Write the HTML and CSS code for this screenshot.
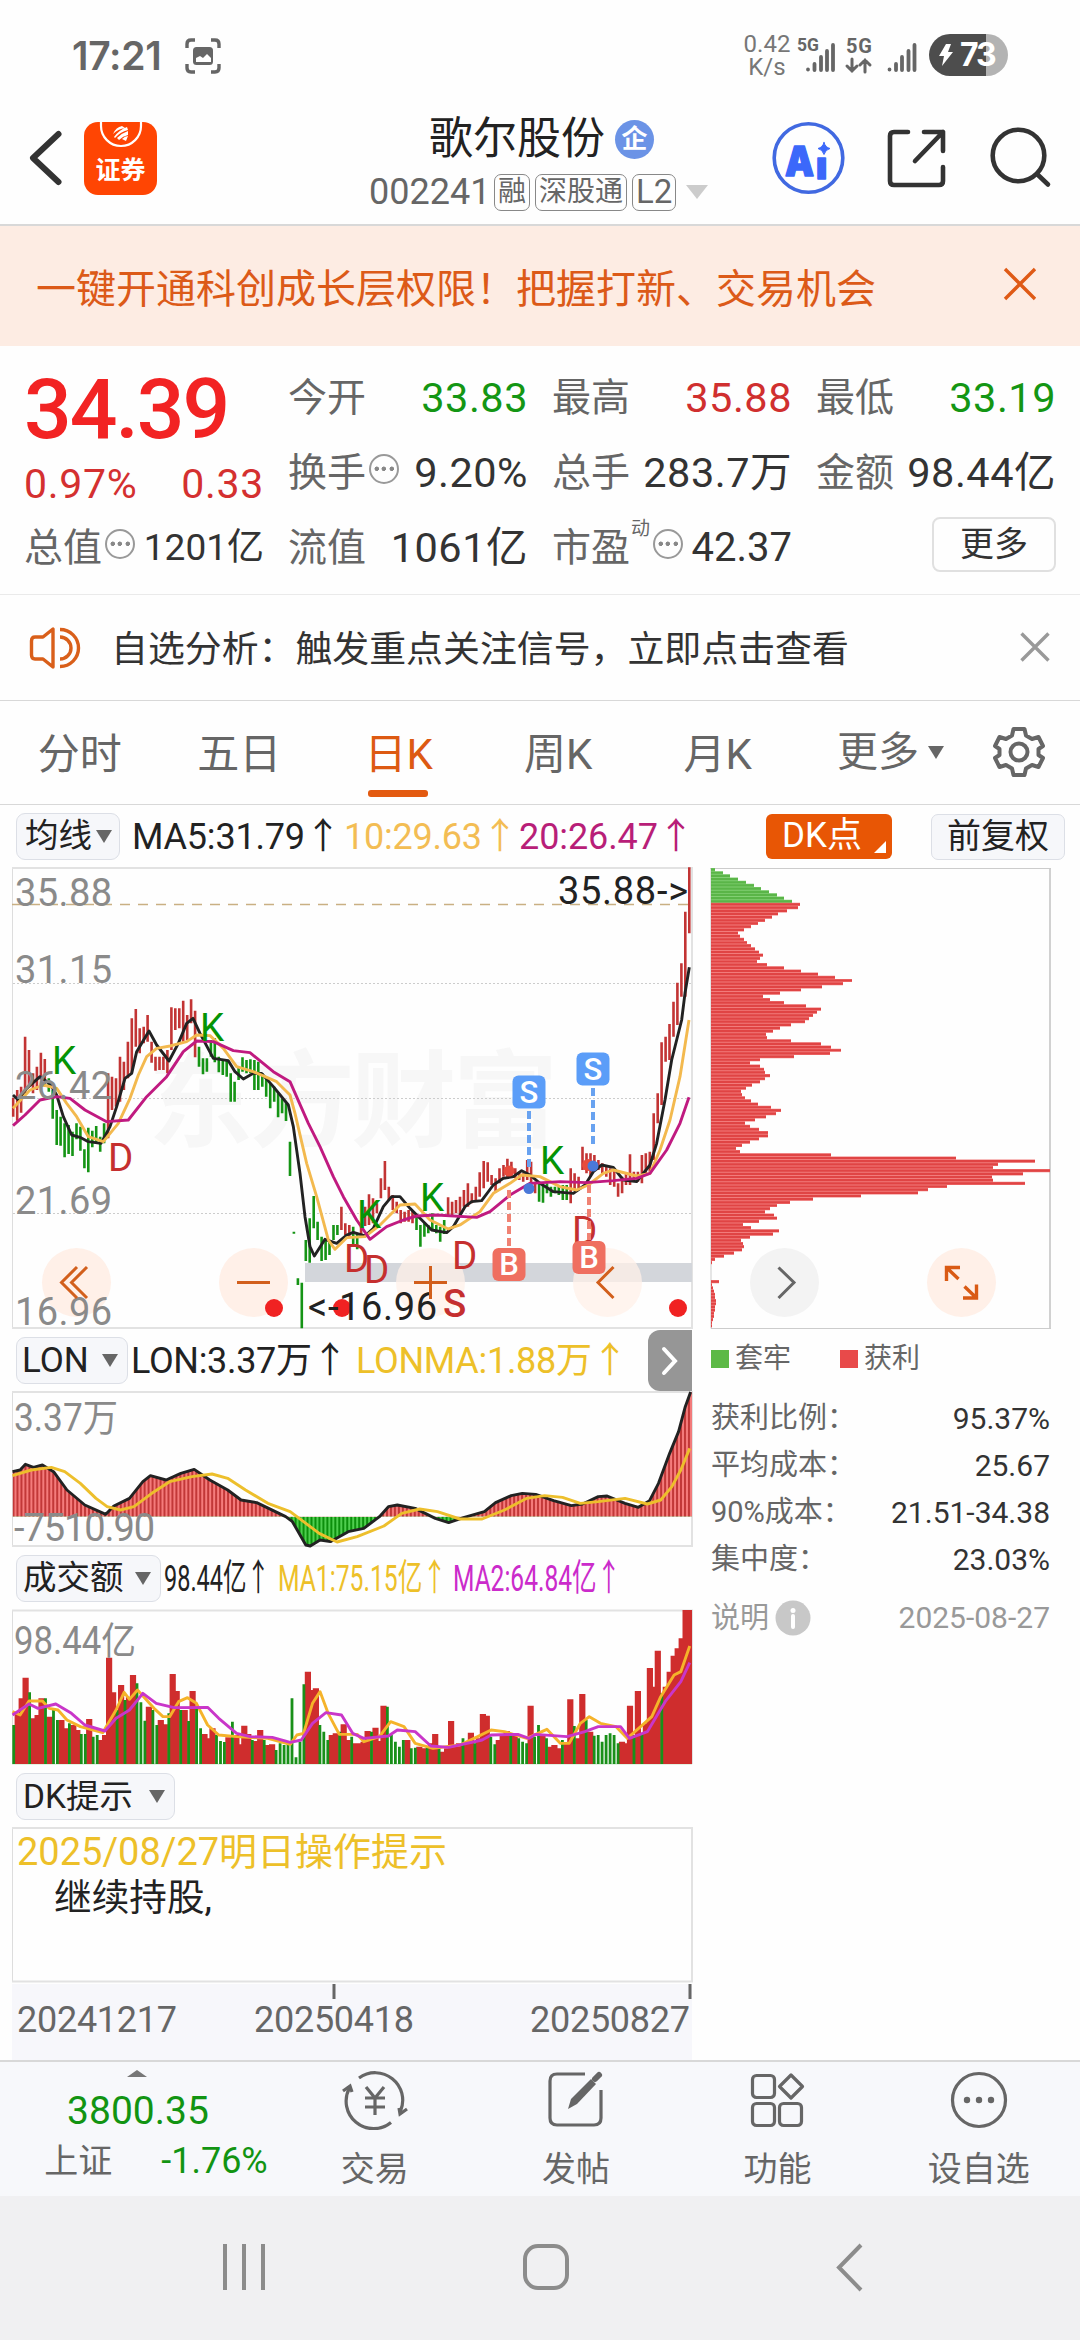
FILE: index.html
```html
<!DOCTYPE html>
<html lang="zh-CN">
<head>
<meta charset="utf-8">
<title>歌尔股份 002241</title>
<link rel="stylesheet" href="styles.css">
</head>
<body>
<header class="status">
  <span class="clock">17:21</span>
  <svg class="shot-icon" width="36" height="36" viewBox="0 0 36 36" fill="none" stroke="#666" stroke-width="3.4"><path d="M2 10V6q0-4 4-4h4M26 2h4q4 0 4 4v4M34 26v4q0 4-4 4h-4M10 34H6q-4 0-4-4v-4"/><rect x="8" y="9" width="20" height="18" rx="3.5" fill="#666" stroke="none"/><path d="M11 24v-4l4-2 3 2 4-4 4 4v4z" fill="#fff" stroke="none"/></svg>
  <div class="status-right">
    <div class="speed"><span>0.42</span><span>K/s</span></div>
    <svg class="signals" width="172" height="44" viewBox="792 33 172 44" fill="none" stroke="#666" stroke-width="3.8" stroke-linecap="round"><g fill="#666" stroke="none" class="net"><text x="796" y="51" font-size="17.5" textLength="22">5G</text><text x="845" y="53" font-size="20" textLength="26">5G</text></g><path d="M807 69.500v.1M813.500 64v6M820 57v13M826 51v19M832 45v25M888.500 69.500v.1M895 64v6M901 57v13M907.500 51v19M913.500 45v25"/><path stroke-width="3" d="M851 59v12M846 66l5 5 5-5M864 72V60M859 65l5-5 5 5"/></svg>
    <div class="battery"><svg width="14" height="22" viewBox="0 0 14 22"><path d="M7 0L0 12h5l-2 10L14 8H9l3-8z" fill="#fff"/></svg><b>73</b></div>
  </div>
</header>

<nav class="topbar">
  <svg class="back" width="36" height="58" viewBox="28 129 36 58"><path d="M58.500 134L33 158l25.500 24" fill="none" stroke="#333" stroke-width="6" stroke-linecap="round" stroke-linejoin="round"/></svg>
  <div class="broker"><svg width="44" height="27" viewBox="0 0 44 27"><path d="M2 0v4a20 20 0 0 0 40 0V0" fill="none" stroke="#fff" stroke-width="2.200"/><path d="M14 12Q17 5 23 4L26 6Q19 7 14 12ZM15 15Q20 8 28 5l1 3Q21 10 16 16ZM18 16Q23 11 29 9v4q-5 1-9 5zM23 17q3-3 6-3l-2 5z" fill="#fff"/></svg><span>证券</span></div>
  <div class="title">
    <div class="name">歌尔股份<i class="corp">企</i></div>
    <div class="code"><span>002241</span><i class="tag">融</i><i class="tag">深股通</i><i class="tag">L2</i><i class="caret"></i></div>
  </div>
  <svg class="tools" width="285" height="78" viewBox="769 119 285 78" fill="none" stroke="#333" stroke-width="4.600" stroke-linecap="round" stroke-linejoin="round">
    <circle cx="808.500" cy="158" r="34.300" stroke="#4169e1" stroke-width="3.600"/>
    <g class="ai"><text x="785" y="176" font-size="41" textLength="29" lengthAdjust="spacingAndGlyphs">A</text><text x="816" y="179" font-size="38">ı</text></g>
    <path d="M824 142.500q1.500 5 6 6-4.500 1-6 6-1.500-5-6-6 4.500-1 6-6z" fill="#3b68fa" stroke="#3b68fa" stroke-width="1"/>
    <path d="M908 132h-14q-4 0-4 4v45q0 4 4 4h45q4 0 4-4v-14M924 132h19v19M943 132l-28 29"/>
    <circle cx="1018.500" cy="155.500" r="25.800"/><path d="M1037 174l11 10.500"/>
  </svg>
</nav>

<section class="banner"><span>一键开通科创成长层权限！把握打新、交易机会</span><svg width="34" height="34" viewBox="0 0 34 34"><path d="M2 2l30 30M32 2L2 32" stroke="#df5a16" stroke-width="3.400"/></svg></section>

<section class="quote">
  <div class="lead">
    <div class="price">34.39</div>
    <div class="chg"><span>0.97%</span><span>0.33</span></div>
    <div class="cell small"><label>总值</label><i class="dots"></i><b>1201亿</b></div>
  </div>
  <div class="cell"><label>今开</label><b class="down">33.83</b></div>
  <div class="cell"><label>最高</label><b class="up">35.88</b></div>
  <div class="cell"><label>最低</label><b class="down">33.19</b></div>
  <div class="cell"><label>换手</label><i class="dots"></i><b>9.20%</b></div>
  <div class="cell"><label>总手</label><b>283.7万</b></div>
  <div class="cell"><label>金额</label><b>98.44亿</b></div>
  <div class="cell"><label>流值</label><b>1061亿</b></div>
  <div class="cell pe"><label>市盈</label><sup>动</sup><i class="dots"></i><b>42.37</b></div>
  <div class="cell"><span class="more">更多</span></div>
</section>

<section class="notice">
  <svg width="54" height="46" viewBox="28 624 54 46" fill="none" stroke="#d95f1a" stroke-width="3.400"><path d="M53 628v38L43 658h-8q-3.500 0-3.500-4v-14q0-4 3.500-4h8z" stroke-linejoin="round"/><path d="M60 636a11 11 0 0 1 0 22M60 628.500a18.500 18.500 0 0 1 0 37"/></svg>
  <span>自选分析：触发重点关注信号，立即点击查看</span>
  <svg width="30" height="30" viewBox="0 0 30 30"><path d="M1.500 1.500l27 27M28.500 1.500l-27 27" stroke="#999" stroke-width="3.400"/></svg>
</section>

<nav class="tabs">
  <span>分时</span><span>五日</span><span class="on">日K</span><span>周K</span><span>月K</span>
  <span class="tab-more">更多<i class="tri"></i></span>
  <svg width="52" height="52" viewBox="-26 -26 52 52" fill="none" stroke="#666" stroke-width="4"><path stroke-linejoin="round" d="M-5.500-23H5.500L7-16.500L13-13L19.500-15L24-6L19.500-3V3L24 6L19.500 15L13 13L7 16.500L5.500 23H-5.500L-7 16.500L-13 13L-19.500 15L-24 6L-19.500 3V-3L-24-6L-19.500-15L-13-13L-7-16.500Z"/><circle r="8.500"/></svg>
</nav>

<main class="panel">
  <div class="left">
    <div class="ind-row first">
      <span class="select">均线<i class="tri"></i></span>
      <svg width="572" height="62" viewBox="120 805 572 62" class="ind"><text x="132" y="849" textLength="173">MA5:31.79</text><text x="305" y="849">↑</text><g fill="#f3bd54"><text x="344" y="849" textLength="138">10:29.63</text><text x="482" y="849">↑</text></g><g fill="#b81e78"><text x="519" y="849" textLength="139">20:26.47</text><text x="658" y="849">↑</text></g></svg>
    </div>

    <svg class="plot" width="700" height="463" viewBox="0 867 700 463">
      <text class="mark" x="148" y="1138" textLength="410">东方财富</text>
      <path d="M13 983.500H691M13 1098.500H691M13 1213.500H691" stroke="#ccc" stroke-dasharray="2 2"/>
      <path d="M12.500 868V1328" stroke="#ddd"/><path d="M12 868H693M12 1328H693M692 867V1329" stroke="#e2e2e2" stroke-width="2"/>
      <path d="M12 904.500H692" stroke="#c9b083" stroke-width="1.500" stroke-dasharray="10 8"/>
      <rect x="305" y="1263" width="387" height="19" fill="#d3d6db"/>
      <g fill="#fff0e8"><circle cx="76.500" cy="1282.500" r="34.500"/><circle cx="253.500" cy="1282.500" r="34.500"/><circle cx="430.500" cy="1282.500" r="34.500" fill-opacity=".75"/><circle cx="607.500" cy="1282.500" r="34.500" fill-opacity=".75"/></g>
      <g id="candles"></g>
      <g class="mas" transform="translate(0 860) scale(.33333)">
        <path stroke="#222" d="M39 705L55 720L80 685L120 650L150 672L170 705L190 770L215 825L240 832L265 845L303 850L330 800L350 740L375 655L395 640L410 575L447 513L470 555L507 603L535 550L560 490L579 475L600 520L640 595L685 602L705 635L730 657L760 640L785 640L820 680L865 735L880 800L900 940L915 1070L930 1160L943 1188L975 1138L1010 1150L1040 1125L1060 1117L1095 1128L1120 1105L1150 1040L1175 1010L1200 1010L1230 1045L1260 1075L1295 1110L1340 1118L1360 1100L1395 1040L1415 1025L1445 1022L1480 975L1510 955L1540 950L1565 932L1590 945L1620 970L1660 995L1720 1000L1755 975L1780 935L1805 915L1840 922L1870 960L1910 965L1950 915L1970 850L1995 720L2015 600L2045 480L2055 400L2068 322"/>
        <path stroke="#f3b94e" d="M39 745L90 690L130 675L170 685L200 730L230 770L265 830L310 845L355 790L390 715L415 645L440 590L470 565L510 558L560 545L590 525L630 527L670 565L710 620L760 635L830 665L870 705L885 760L920 910L950 1010L985 1140L1005 1168L1040 1133L1095 1130L1140 1095L1200 1035L1245 1032L1290 1080L1345 1107L1380 1095L1440 1055L1480 1000L1530 970L1565 945L1620 950L1680 980L1730 990L1765 975L1810 940L1840 930L1910 948L1950 940L1980 870L2010 780L2040 650L2067 480"/>
        <path stroke="#c01a80" d="M39 797L75 765L120 720L170 710L210 715L255 750L320 785L385 780L440 710L500 650L550 575L590 543L640 545L700 572L750 578L820 635L870 665L925 790L960 860L1000 950L1030 1010L1070 1080L1110 1138L1160 1100L1210 1080L1250 1068L1310 1065L1430 1072L1470 1055L1530 1005L1590 970L1680 965L1760 968L1840 962L1910 955L1950 940L2000 870L2040 790L2067 712"/>
      </g>
      <g class="axis"><text x="15" y="905.500" textLength="97">35.88</text><text x="15" y="983" textLength="97">31.15</text><text x="15" y="1099" textLength="97">26.42</text><text x="15" y="1213.500" textLength="97">21.69</text><text x="15" y="1325" textLength="97">16.96</text></g>
      <g class="sig" fill="#059405"><text x="52" y="1073.500">K</text><text x="200" y="1041">K</text><text x="357" y="1228">K</text><text x="420" y="1210.500">K</text><text x="540" y="1173.500">K</text></g>
      <g class="sig" fill="#c52f2f"><text x="108" y="1171">D</text><text x="344" y="1272">D</text><text x="364" y="1283">D</text><text x="452" y="1269">D</text><text x="572" y="1244">D</text><text x="443" y="1316.500" font-weight="500">S</text></g>
      <g fill="none" stroke-width="4" stroke-dasharray="8 4"><path stroke="#68a2f0" d="M529 1111V1168M593 1088V1145"/><path stroke="#f08273" d="M509 1190V1247M589 1185V1240"/></g>
      <circle cx="509" cy="1171" r="5.500" fill="#e84c3d"/><circle cx="588" cy="1165" r="6" fill="#e84c3d"/><circle cx="529" cy="1188.500" r="5.500" fill="#4a78d8"/><circle cx="593" cy="1166" r="5.500" fill="#4a78d8"/>
      <g class="badge"><rect x="512.500" y="1075.500" width="33" height="33" rx="6" fill="#5b9df8"/><rect x="576.500" y="1052.500" width="33" height="33" rx="6" fill="#5b9df8"/><rect x="492.500" y="1248" width="33" height="33" rx="6" fill="#ef6f60"/><rect x="572.500" y="1241" width="33" height="33" rx="6" fill="#ef6f60"/><text x="529" y="1103">S</text><text x="593" y="1080">S</text><text x="509" y="1275">B</text><text x="589" y="1268">B</text></g>
      <g fill="#f02222"><circle cx="274" cy="1308" r="9"/><circle cx="342" cy="1308" r="9"/><circle cx="678" cy="1308" r="9"/></g>
      <g class="tip"><text x="308" y="1320" textLength="129">&lt;-16.96</text><text x="558" y="903.500" textLength="130">35.88-&gt;</text></g>
      <path d="M77 1267L61.500 1282.500L77 1298M87 1267L71.500 1282.500L87 1298M237 1282.500H270M414 1282.500H447M430.500 1266V1299M613.500 1267L598 1282.500L613.500 1298" fill="none" stroke="#d25f1c" stroke-width="3"/>
    </svg>

    <div class="ind-row">
      <span class="select lon">LON<i class="tri"></i></span>
      <svg width="520" height="61" viewBox="128 1330 520 61" class="ind"><text x="131" y="1373" textLength="181">LON:3.37万</text><text x="312" y="1373">↑</text><g fill="#edc029"><text x="356" y="1373" textLength="236">LONMA:1.88万</text><text x="592" y="1373">↑</text></g></svg>
      <span class="expand"><svg width="18" height="30" viewBox="0 0 18 30"><path d="M3 3l11 12L3 27" fill="none" stroke="#fff" stroke-width="4" stroke-linecap="round"/></svg></span>
    </div>

    <svg class="plot" width="700" height="156" viewBox="0 1391 700 156">
      <defs>
        <pattern id="pr" x="28" width="8.900" height="20" patternUnits="userSpaceOnUse"><rect width="9" height="20" fill="#f57c7c"/><rect width="4.500" height="20" fill="#c23838"/></pattern>
        <pattern id="pg" x="28" width="8.900" height="20" patternUnits="userSpaceOnUse"><rect width="9" height="20" fill="#4fcf4f"/><rect width="4.500" height="20" fill="#0c8f0c"/></pattern>
        <clipPath id="above"><rect x="28" y="180" width="1523" height="380"/></clipPath><clipPath id="below"><rect x="28" y="560" width="1523" height="88"/></clipPath>
        <path id="lonfill" d="M28 560L28 425L45 420L57 403L75 412L95 405L120 425L150 480L190 525L237 553L255 528L290 505L320 455L337 437L372 450L405 430L435 418L470 450L510 480L540 510L575 518L640 560L655 575L685 645L695 648L717 630L740 635L780 605L815 595L850 560L870 530L890 525L930 535L975 565L1005 578L1040 562L1085 545L1110 518L1145 497L1170 490L1200 493L1240 512L1280 527L1305 522L1340 500L1360 498L1400 520L1430 532L1455 512L1475 460L1500 370L1520 305L1535 230L1547 186L1550 186V560Z"/>
      </defs>
      <path d="M12.500 1392V1546" stroke="#ddd"/><path d="M12 1392H693M12 1546H693M692 1391V1547" stroke="#e2e2e2" stroke-width="2"/>
      <g class="mas" transform="translate(0 1330) scale(.44643 .33333)">
        <use href="#lonfill" fill="url(#pr)" clip-path="url(#above)"/><use href="#lonfill" fill="url(#pg)" clip-path="url(#below)"/>
        <path stroke="#222" d="M28 425L45 420L57 403L75 412L95 405L120 425L150 480L190 525L237 553L255 528L290 505L320 455L337 437L372 450L405 430L435 418L470 450L510 480L540 510L575 518L640 560L655 575L685 645L695 648L717 630L740 635L780 605L815 595L850 560L870 530L890 525L930 535L975 565L1005 578L1040 562L1085 545L1110 518L1145 497L1170 490L1200 493L1240 512L1280 527L1305 522L1340 500L1360 498L1400 520L1430 532L1455 512L1475 460L1500 370L1520 305L1535 230L1547 186"/>
        <path stroke="#edbf2c" d="M28 437L70 420L115 412L145 425L180 460L215 505L240 530L270 540L300 530L340 490L380 455L430 440L475 432L510 445L550 480L600 520L650 545L680 575L715 610L755 636L800 620L860 588L900 550L940 537L980 545L1030 567L1080 567L1130 540L1180 505L1220 497L1260 502L1300 520L1340 515L1400 505L1450 522L1480 510L1505 470L1525 420L1545 355"/>
      </g>
      <g class="axis"><text x="14" y="1431" textLength="104" lengthAdjust="spacingAndGlyphs">3.37万</text><text x="14" y="1541" textLength="141">-7510.90</text></g>
    </svg>

    <div class="ind-row tall">
      <span class="select vol">成交额<i class="tri"></i></span>
      <svg width="531" height="62" viewBox="161 1547 531 62" class="ind narrow"><text x="164" y="1590.500" textLength="106" lengthAdjust="spacingAndGlyphs">98.44亿↑</text><text x="278" y="1590.500" fill="#edc029" textLength="169" lengthAdjust="spacingAndGlyphs">MA1:75.15亿↑</text><text x="453" y="1590.500" fill="#cb2bcb" textLength="168" lengthAdjust="spacingAndGlyphs">MA2:64.84亿↑</text></svg>
    </div>

    <svg class="plot" width="700" height="157" viewBox="0 1609 700 157">
      <path d="M12.500 1610V1764" stroke="#ddd"/><path d="M12 1610.500H693M692 1610V1764" stroke="#e2e2e2" stroke-width="2"/><path d="M12 1764H692" stroke="#d9eed9" stroke-width="1.500"/>
      <g id="volume"></g>
      <g class="mas" transform="translate(0 1330) scale(.44643 .33333)">
        <path stroke="#f5b32a" d="M28 1145L45 1155L65 1113L95 1113L110 1135L130 1140L150 1170L180 1190L230 1208L260 1140L278 1087L290 1108L308 1080L345 1135L365 1160L380 1160L400 1115L420 1103L440 1120L465 1185L490 1215L530 1220L600 1225L650 1243L665 1215L680 1210L700 1120L717 1085L735 1150L760 1213L800 1213L815 1235L850 1220L875 1175L905 1190L930 1240L970 1255L1030 1245L1070 1220L1100 1200L1130 1205L1180 1225L1225 1198L1255 1240L1275 1240L1300 1180L1320 1160L1345 1180L1380 1190L1405 1225L1435 1190L1460 1160L1480 1100L1510 1035L1525 1025L1545 948"/>
        <path stroke="#c936c9" d="M28 1155L65 1122L85 1135L125 1122L160 1150L190 1185L235 1203L260 1165L290 1140L320 1090L350 1120L390 1133L465 1132L490 1165L530 1210L560 1220L610 1222L650 1237L675 1230L700 1180L730 1148L765 1155L790 1210L815 1225L870 1218L890 1200L930 1205L965 1248L1005 1252L1080 1230L1100 1215L1160 1213L1185 1225L1200 1213L1270 1220L1310 1205L1340 1190L1390 1190L1410 1225L1450 1205L1490 1115L1525 1055L1545 998"/>
      </g>
      <g class="axis"><text x="14" y="1653.500" textLength="122" lengthAdjust="spacingAndGlyphs">98.44亿</text></g>
    </svg>

    <div class="ind-row"><span class="select dk">DK提示<i class="tri"></i></span></div>

    <svg class="plot" width="700" height="233" viewBox="0 1827 700 233">
      <rect x="12" y="1984" width="680" height="76" fill="#f7f7fb"/>
      <path d="M12.500 1828V1981" stroke="#ddd"/><path d="M12 1828H693M12 1981.500H693M692 1827V1982" stroke="#e2e2e2" stroke-width="2"/>
      <text x="17" y="1865" font-size="38" fill="#edc029" textLength="430" lengthAdjust="spacingAndGlyphs">2025/08/27明日操作提示</text>
      <text x="54" y="1910.500" font-size="37" fill="#222" textLength="158" lengthAdjust="spacingAndGlyphs">继续持股,</text>
      <path d="M334 1984V1999M690 1984V1999" stroke="#666" stroke-width="3"/>
      <g font-size="36" fill="#666"><text x="17" y="2032" textLength="160">20241217</text><text x="254" y="2032" textLength="160">20250418</text><text x="530" y="2032" textLength="160">20250827</text></g>
    </svg>
  </div>

  <aside class="right">
    <div class="opts"><span class="dkbtn">DK点<i></i></span><span class="adj">前复权</span></div>
    <svg class="plot chips" width="342" height="463" viewBox="710 867 342 463">
      <path d="M710 868.500H1051M711 868V1328.500H1051" fill="none" stroke="#ccc"/><path d="M1050 868V1329" stroke="#ccc" stroke-width="1.800"/>
      <g id="chips"></g>
      <circle cx="784.500" cy="1282.500" r="34.500" fill="#f3f3f3"/><circle cx="961.500" cy="1282.500" r="34.500" fill="#fff0e8"/>
      <path d="M778.500 1267.500L794 1282.500L778.500 1298" fill="none" stroke="#666" stroke-width="3"/>
      <path d="M960 1267.500H946.500V1281M947 1268L958.500 1279M963 1298H976.500V1284.500M976 1297.500L964.500 1286.500" fill="none" stroke="#d95a14" stroke-width="3.400"/>
    </svg>
    <div class="legend"><i class="g"></i><span>套牢</span><i class="r"></i><span>获利</span></div>
    <dl><dt>获利比例：</dt><dd>95.37%</dd><dt>平均成本：</dt><dd>25.67</dd><dt>90%成本：</dt><dd>21.51-34.38</dd><dt>集中度：</dt><dd>23.03%</dd></dl>
    <div class="note"><span>说明</span><svg width="36" height="36" viewBox="0 0 36 36"><circle cx="18" cy="18" r="17.500" fill="#c8c8c8"/><circle cx="18" cy="10.500" r="2.500" fill="#fff"/><path d="M18 16v11" stroke="#fff" stroke-width="4" stroke-linecap="round"/></svg><time>2025-08-27</time></div>
  </aside>
</main>

<footer class="bottom">
  <div class="index"><i class="uptri"></i><strong>3800.35</strong><div><span>上证</span><b>-1.76%</b></div></div>
  <div class="item"><svg width="66" height="60" viewBox="-33 -30 66 60" fill="none" stroke="#666" stroke-width="3.200"><path d="M-16-22A27.500 27.500 0 0 1 25.500 11M16 22.500A27.500 27.500 0 0 1-25.500-12"/><path d="M-32-9l7-5 2 6M32 9l-7 5-1-6"/><path d="M-9-13L0-2L9-13M0-2V15M-10-2H10M-10 7H10"/></svg><span>交易</span></div>
  <div class="item"><svg width="66" height="60" viewBox="-33 -30 66 60" fill="none" stroke="#666" stroke-width="3.200"><path d="M9-26H-19q-7 0-7 7V18q0 7 7 7H18q7 0 7-7V-10"/><path d="M-8 9L-5-1L15-21l5 5L1 4z" fill="#666" stroke="none"/><path d="M19-21l4-4" stroke-width="6" stroke-linecap="round"/></svg><span>发帖</span></div>
  <div class="item"><svg width="66" height="60" viewBox="-33 -30 66 60" fill="none" stroke="#666" stroke-width="3.200" stroke-linejoin="round"><rect x="-24.500" y="-24.500" width="22" height="22" rx="4"/><rect x="-24.500" y="3.500" width="22" height="22" rx="4"/><rect x="2.500" y="3.500" width="22" height="22" rx="4"/><path d="M14-25L25.500-13.500L14-2L2.500-13.500Z"/></svg><span>功能</span></div>
  <div class="item"><svg width="66" height="60" viewBox="-33 -30 66 60"><circle r="26.500" fill="none" stroke="#666" stroke-width="3.200"/><g fill="#666"><circle cx="-12" r="3.200"/><circle r="3.200"/><circle cx="12" r="3.200"/></g></svg><span>设自选</span></div>
</footer>

<nav class="sysnav">
  <svg width="1080" height="144" viewBox="0 2196 1080 144" fill="none" stroke="#8c8c8c" stroke-width="4"><path d="M225 2244V2290M244 2244V2290M263 2244V2290"/><rect x="525" y="2246" width="42" height="42" rx="13"/><path d="M861 2245L839 2267.500L861 2290"/></svg>
</nav>
<script src="charts.js"></script>
</body>
</html>
```

FILE: styles.css
```css
* { box-sizing: border-box; }
body { margin: 0; width: 1080px; height: 2340px; overflow: hidden; background: #fefefe; color: #333; font-family: Roboto, "Noto Sans CJK SC", sans-serif; }
svg { display: block; flex: none; }
i { font-style: normal; }
b { font-weight: 400; }
span, b, label { white-space: nowrap; }

.status { height: 92px; padding: 0 72px; display: flex; align-items: flex-start; }
.clock { font: 600 39px/44px Inter, sans-serif; color: #666; margin-top: 34px; letter-spacing: -0.3px; width: 113px; }
.shot-icon { margin-top: 38px; }
.status-right { margin-left: auto; margin-top: 33px; display: flex; }
.speed { display: flex; flex-direction: column; align-items: center; color: #777; font-size: 24px; line-height: 22.500px; width: 48px; margin-right: 2px; }
.signals { margin-right: -36px; }
.net { font-family: Roboto, sans-serif; font-weight: 700; }
.battery { width: 79px; height: 42px; margin-top: 1px; border-radius: 21px; background: linear-gradient(90deg, #4d4d4d 57px, #b3b3b3 57px); display: flex; align-items: center; padding-left: 10px; gap: 7px; }
.battery b { color: #fff; font: 700 32px/42px Inter, sans-serif; letter-spacing: -2px; }

.topbar { height: 134px; border-bottom: 2px solid #d8d8d8; display: flex; align-items: flex-start; padding-left: 28px; }
.back { margin-top: 37px; }
.broker { width: 73px; height: 73px; margin: 30px 0 0 20px; border-radius: 14px; background: #ff4503; display: flex; flex-direction: column; align-items: center; }
.broker span { color: #fff; font: 700 25px/26px "Noto Sans CJK SC", sans-serif; margin-top: 6px; }
.title { margin-left: 212px; width: 346px; }
.name { font-size: 44px; line-height: 60px; color: #222; margin: 16px 0 0 60px; height: 62px; display: flex; align-items: center; }
.corp { width: 39px; height: 39px; border-radius: 50%; background: #6b93e6; color: #fff; font-size: 26px; font-weight: 700; line-height: 38px; text-align: center; margin-left: 10px; }
.code { display: flex; align-items: center; height: 44px; font-size: 36px; line-height: 44px; color: #666; }
.code span { width: 125px; }
.tag { border: 1.500px solid #888; border-radius: 7px; height: 37px; line-height: 34px; font-size: 28px; padding: 0 3px; margin-right: 5px; }
.tag:nth-of-type(3) { font-size: 33px; padding: 0 3px; }
.caret { border: 11px solid transparent; border-top: 14px solid #ccc; border-bottom: 0; margin-left: 5px; }
.tools { margin: 27px 0 0 54px; }
.ai { font-family: Inter, sans-serif; font-weight: 900; fill: #3b68fa; stroke: #3b68fa; stroke-width: 1.5px; }

.banner { height: 120px; background: #fdece3; color: #dc5a18; display: flex; align-items: center; justify-content: space-between; padding: 0 43px 0 36px; font-size: 40px; }
.banner svg { margin-top: -4px; }

.quote { height: 249px; border-bottom: 1.500px solid #eaeaea; padding: 14px 0 0 24px; display: grid; grid-template-columns: 240px 240px 240px 240px; grid-template-rows: 75px 75px 75px; column-gap: 24px; }
.lead { grid-row: 1 / 4; display: flex; flex-direction: column; }
.price { height: 97px; line-height: 99px; font-size: 84px; font-weight: 500; color: #f22323; letter-spacing: -2px; }
.chg { height: 53px; line-height: 54px; font-size: 41px; letter-spacing: .7px; color: #d43030; display: flex; justify-content: space-between; }
.cell { height: 75px; display: flex; align-items: center; line-height: 60px; }
.cell label { font-size: 39px; color: #666; }
.cell b { margin-left: auto; font-size: 41.500px; letter-spacing: .5px; }
.cell.small b { font-size: 37px; letter-spacing: 0; }
.cell .down { color: #149614; }
.cell .up { color: #d02f2f; }
.dots { width: 30px; height: 30px; border: 2.500px solid #999; border-radius: 50%; margin: -8px 0 0 3px; background: radial-gradient(circle, #888 0 2px, transparent 2.500px) 50% 50% / 7.500px 7.500px no-repeat, radial-gradient(circle, #888 0 2px, transparent 2.500px) 10% 50% / 7.500px 7.500px no-repeat, radial-gradient(circle, #888 0 2px, transparent 2.500px) 90% 50% / 7.500px 7.500px no-repeat; }
.pe sup { font-size: 19px; line-height: 20px; color: #666; margin: -38px 0 0 1px; }
.cell.pe b { font-size: 40px; letter-spacing: 0; }
.more { margin-left: auto; width: 124px; height: 55px; border: 2px solid #e0e0e0; border-radius: 8px; text-align: center; font-size: 34px; line-height: 50px; margin-top: -6px; }

.notice { height: 106px; border-bottom: 1.500px solid #d8d8d8; display: flex; align-items: center; padding: 0 30px 0 28px; font-size: 36.900px; }
.notice span { margin-left: 29px; margin-top: -4px; }
.notice svg:last-child { margin-left: auto; margin-top: -1px; }

.tabs { height: 104px; border-bottom: 1.500px solid #d8d8d8; display: flex; align-items: center; font-size: 42px; color: #666; }
.tabs > span { width: 159.500px; text-align: center; height: 102px; line-height: 105px; position: relative; }
.tabs .on { color: #dd5a12; }
.tabs .on::after { content: ""; position: absolute; left: 50%; margin-left: -31px; bottom: 7px; width: 60px; height: 6.500px; border-radius: 3px; background: #e35a10; }
.tabs .tab-more { width: 186px; display: flex; align-items: center; justify-content: center; gap: 9px; font-size: 41px; }
.tri { border: 8px solid transparent; border-top: 13px solid #666; border-bottom: 0; display: inline-block; }
.tabs svg { margin-left: 9px; margin-top: -2px; }

.panel { display: flex; height: 1255px; }
.left { width: 700px; }
.right { width: 380px; padding-left: 10px; }
.plot { overflow: visible; font-family: Roboto, "Noto Sans CJK SC", sans-serif; }
.ind-row { height: 61px; display: flex; align-items: center; padding-left: 16px; width: 700px; }
.ind-row.first, .ind-row.tall { height: 62px; }
.select { background: #f6f7fa; border: 1.500px solid #dcdfe6; border-radius: 9px; height: 47px; width: 104px; padding: 0 9px; display: flex; align-items: center; justify-content: space-between; font-size: 33.500px; line-height: 42px; color: #222; flex: none; }
.first .select { padding: 0 7px 0 8px; }
.lon { width: 112px; font-size: 35px; padding-left: 5px; }
.vol { width: 145px; padding-left: 6px; }
.dk { width: 159px; padding-left: 6px; }
.ind { font-size: 36px; fill: #222; }
.ind.narrow { font-size: 37px; }
.expand { width: 44px; height: 61px; background: #969696; border-radius: 12px 0 0 12px; display: flex; align-items: center; justify-content: center; }
.mark { font-size: 105px; font-weight: 700; fill: #f7f7f7; }
.mas path { fill: none; stroke-width: 2.900px; vector-effect: non-scaling-stroke; stroke-linejoin: round; }
.axis { font-size: 38px; fill: #8a8a8a; }
.sig { font-size: 38.500px; }
.tip { font-size: 38px; fill: #222; }
.badge text { font-size: 31px; font-weight: 500; fill: #fff; text-anchor: middle; }

.opts { height: 62px; display: flex; align-items: center; padding-left: 56px; padding-top: 1px; }
.dkbtn { width: 126px; height: 45px; border-radius: 6px; background: #e85605; color: #fff; font-size: 35px; line-height: 43px; padding-left: 16px; position: relative; }
.dkbtn i { position: absolute; right: 6px; bottom: 6px; border-left: 12px solid transparent; border-bottom: 12px solid #fff; }
.adj { width: 134px; height: 46px; margin-left: 39px; border: 1.500px solid #dcdfe6; border-radius: 7px; background: #f6f7fa; font-size: 34px; line-height: 42px; text-align: center; color: #222; }
.legend { height: 58px; margin-left: 1px; display: flex; align-items: center; font-size: 28px; color: #666; line-height: 36px; }
.legend i { width: 18px; height: 18px; background: #5cb946; margin-right: 6px; }
.legend .r { background: #e84a4a; margin-left: 49px; }
dl { margin: 7px 0 0 1px; width: 339px; display: grid; grid-template-columns: auto auto; grid-auto-rows: 47px; line-height: 47px; font-size: 29px; }
dt { color: #666; }
dd { margin: 0; text-align: right; font-size: 30px; }
.note { margin: 16px 0 0 1px; width: 339px; height: 38px; display: flex; align-items: center; color: #999; font-size: 29px; line-height: 38px; }
.note svg { margin-left: 6px; }
.note time { margin-left: auto; font-size: 30px; }

.bottom { height: 136px; background: #f7f8fb; border-top: 2px solid #d8d8d8; display: flex; }
.index { width: 274px; display: flex; flex-direction: column; align-items: center; color: #129412; }
.index strong { font-weight: 400; font-size: 39px; line-height: 46px; margin: 11px 0 0 2px; }
.index div { display: flex; gap: 49px; font-size: 36px; line-height: 48px; margin-left: 38px; margin-top: 3px; }
.index span { color: #666; font-size: 34px; }
.uptri { border: 10px solid transparent; border-bottom: 7px solid #777; border-top: 0; margin-top: 8px; }
.item { width: 201.400px; display: flex; flex-direction: column; align-items: center; padding-top: 8px; color: #666; font-size: 34px; line-height: 46px; }
.item span { margin-top: 16px; }
.sysnav { height: 144px; background: #f0f0f2; }
```

FILE: charts.js
```js
const NS = 'http://www.w3.org/2000/svg';
function addPath(id, d, fill, extra) {
  const p = document.createElementNS(NS, 'path');
  p.setAttribute('d', d);
  p.setAttribute('fill', fill);
  for (const k in extra || {}) p.setAttribute(k, extra[k]);
  document.getElementById(id).appendChild(p);
}

// Daily candles: high and low, in thirds of a pixel below y = 860, then colour
const candles = `713,770r 690,782r 680,758r 530,700r 570,680r 640,700r 620,690r 578,660r 597,680r 655,695g
690,776g 750,855g 770,857g 790,892g 795,882g 815,888g 790,838g 800,872g 868,925g 803,937g
812,862g 798,852g 830,875g 790,850g 640,835r 650,750r 655,740r 590,725r 605,690r 545,655r
475,640r 447,560r 505,580r 500,550r 465,545r 545,608r 590,632r 590,630r 590,630r 570,640r
442,570r 445,510r 445,505r 422,545r 465,540r 418,490r 452,592r 560,620g 595,643g 595,635g
540,590g 535,607g 590,637g 600,645g 600,650g 640,725g 665,725g 620,660g 592,635g 600,640g
598,640g 600,690g 605,690g 640,680g 650,710g 670,745g 680,725g 700,772g 715,760g 730,783g
845,948g 1115,1121g 1255,1275g 1268,1405g 1140,1203g 1075,1208g 1008,1105g 1085,1140g 1130,1203g 1140,1200g
1140,1185g 1095,1140g 1095,1125g 1040,1110r 1090,1125r 1095,1135r 1100,1160g 1120,1168g 1100,1130r 1040,1098r
1003,1095r 1015,1090r 1030,1060r 955,1015r 903,990r 980,1020r 1005,1050r 1025,1060r 1050,1090r 1055,1085r
1050,1085r 1050,1090r 1070,1110g 1095,1160g 1090,1130g 1095,1120g 1060,1110g 1095,1120g 1100,1145g 1080,1122g
1012,1070r 1025,1070r 1020,1060r 1010,1070r 990,1040r 970,1040r 1000,1030r 980,1025r 937,1010r 903,985r
907,965r 945,975r 955,998r 925,970r 915,950r 896,950r 905,950r 925,955r 935,960r 940,965r
900,960r 905,970r 965,1000r 965,1025g 975,1028g 970,1000g 980,1010g 980,1000g 980,1005g 975,1020g
975,1020g 925,1030r 940,990r 950,985r 860,930r 880,940r 880,950r 885,920r 900,930r 910,940r
920,950r 925,975r 930,980r 970,1010r 950,1000r 940,975r 883,975r 935,965r 935,965r 885,970r
880,940r 875,935r 760,900r 700,790r 547,735r 530,605r 492,600r 425,530r 368,495r 310,410r
155,410r 22,220r`.trim().split(/\s+/);
const wick = { r: '', g: '' };
const step = (689.3 - 13.2) / (candles.length - 1);
candles.forEach((c, i) => {
  const [hi, lo] = c.slice(0, -1).split(',').map(Number);
  const x = 13.2 + step * i;
  wick[c.slice(-1)] += `M${x.toFixed(1)} ${(860 + hi / 3).toFixed(1)}V${(860 + lo / 3).toFixed(1)}`;
});
addPath('candles', wick.r, 'none', { stroke: '#c23434', 'stroke-width': 2.6 });
addPath('candles', wick.g, 'none', { stroke: '#159415', 'stroke-width': 2.6 });

// Turnover bars: top edge in thirds of a pixel below y = 1330
const volume = `1185g 1150r 1105r 1043r 1087g 1165r 1155r 1105r 1105g 1160r 1140g 1170g 1170r 1195r 1180g 1185r 1200r 1212g 1212g 1167r
1220g 1215g 1230r 1215r 983r 1087r 1140g 1065r 1110g 1100r 1035r 1060g 1117g 1172g 1130r 1140g 1185g 1170r 1183r 1150g
1032r 1083r 1140g 1140r 1173g 1083r 1135g 1195g 1212r 1225r 1195r 1215g 1233g 1236g 1222r 1175g 1215r 1243r 1187r 1212r
1230g 1233r 1200r 1230g 1245r 1243r 1260g 1240g 1245g 1240g 1105g 1282g 1235g 1063g 1025r 1080r 1075r 1185g 1205g 1230g
1215r 1210r 1205g 1183r 1230r 1220g 1240r 1240r 1235r 1203r 1205g 1193r 1233r 1127r 1130g 1215g 1235g 1250g 1230g 1230r
1255g 1253g 1250r 1255r 1250g 1240r 1212r 1255g 1265r 1255r 1173r 1245r 1240r 1225g 1240r 1208r 1240g 1225r 1152r 1157r
1220g 1243g 1230r 1215r 1203r 1215g 1215r 1225g 1235g 1240g 1127r 1220g 1185g 1215r 1225g 1250r 1245r 1255r 1230g 1240r
1108r 1188g 1225r 1092r 1170g 1205r 1217g 1215g 1235g 1215g 1210g 1215g 1240g 1235r 1240r 1127r 1215g 1083r 1212g 1180r
1014r 1070r 962r 1090g 1070r 1025r 977r 955r 925r 840r 840r`.trim().split(/\s+/);
const bars = { r: '', g: '' };
volume.forEach((v, i) => {
  const k = v.slice(-1), top = 1330 + parseInt(v) / 3, w = k === 'r' ? 6.2 : 2.8;
  const x = Math.max(12.3, 13.7 + 3.976 * i - w / 2);
  bars[k] += `M${x.toFixed(1)} ${top.toFixed(1)}h${Math.min(w, 692 - x).toFixed(1)}V1764h-${Math.min(w, 692 - x).toFixed(1)}z`;
});
addPath('volume', bars.r, '#cf2d2d');
addPath('volume', bars.g, '#199019');

// Cost distribution: bar lengths from the top price down
const held = [4, 12, 19, 27, 35, 43, 50, 58, 66, 73, 81];
const gain = [89,87,76,67,61,54,47,40,33,27,29,33,36,40,44,48,52,49,46,56,73,90,107,124,141,132,111,90,69,52,
  59,73,95,110,106,102,98,94,80,69,62,55,56,80,110,120,130,119,83,49,39,49,53,54,59,54,49,41,35,30,
  31,34,40,47,60,70,65,55,44,34,39,48,57,57,48,39,31,25,29,120,245,324,287,282,339,312,281,282,314,236,
  217,207,150,102,79,66,59,54,63,66,48,32,40,68,62,39,30,32,33,31,23,13,4,1,0,0,0,0,0,8,
  1,2,3,4,4,5,5,4,4,3,3,2,1,1];
function stack(list, start, base, edge) {
  let a = '', b = '';
  list.forEach((len, i) => {
    const y = 868 + 3.169 * (start + i);
    a += `M711 ${y.toFixed(2)}h${len}v3.2h-${len}z`;
    b += `M711 ${(y + 1.6).toFixed(2)}h${len}`;
  });
  addPath('chips', a, base, { opacity: 0.85 });
  addPath('chips', b, 'none', { stroke: edge, 'stroke-width': 2.2 });
}
stack(held, 0, '#6cc75a', '#5ab548');
stack(gain, held.length, '#f06464', '#e04444');
```
